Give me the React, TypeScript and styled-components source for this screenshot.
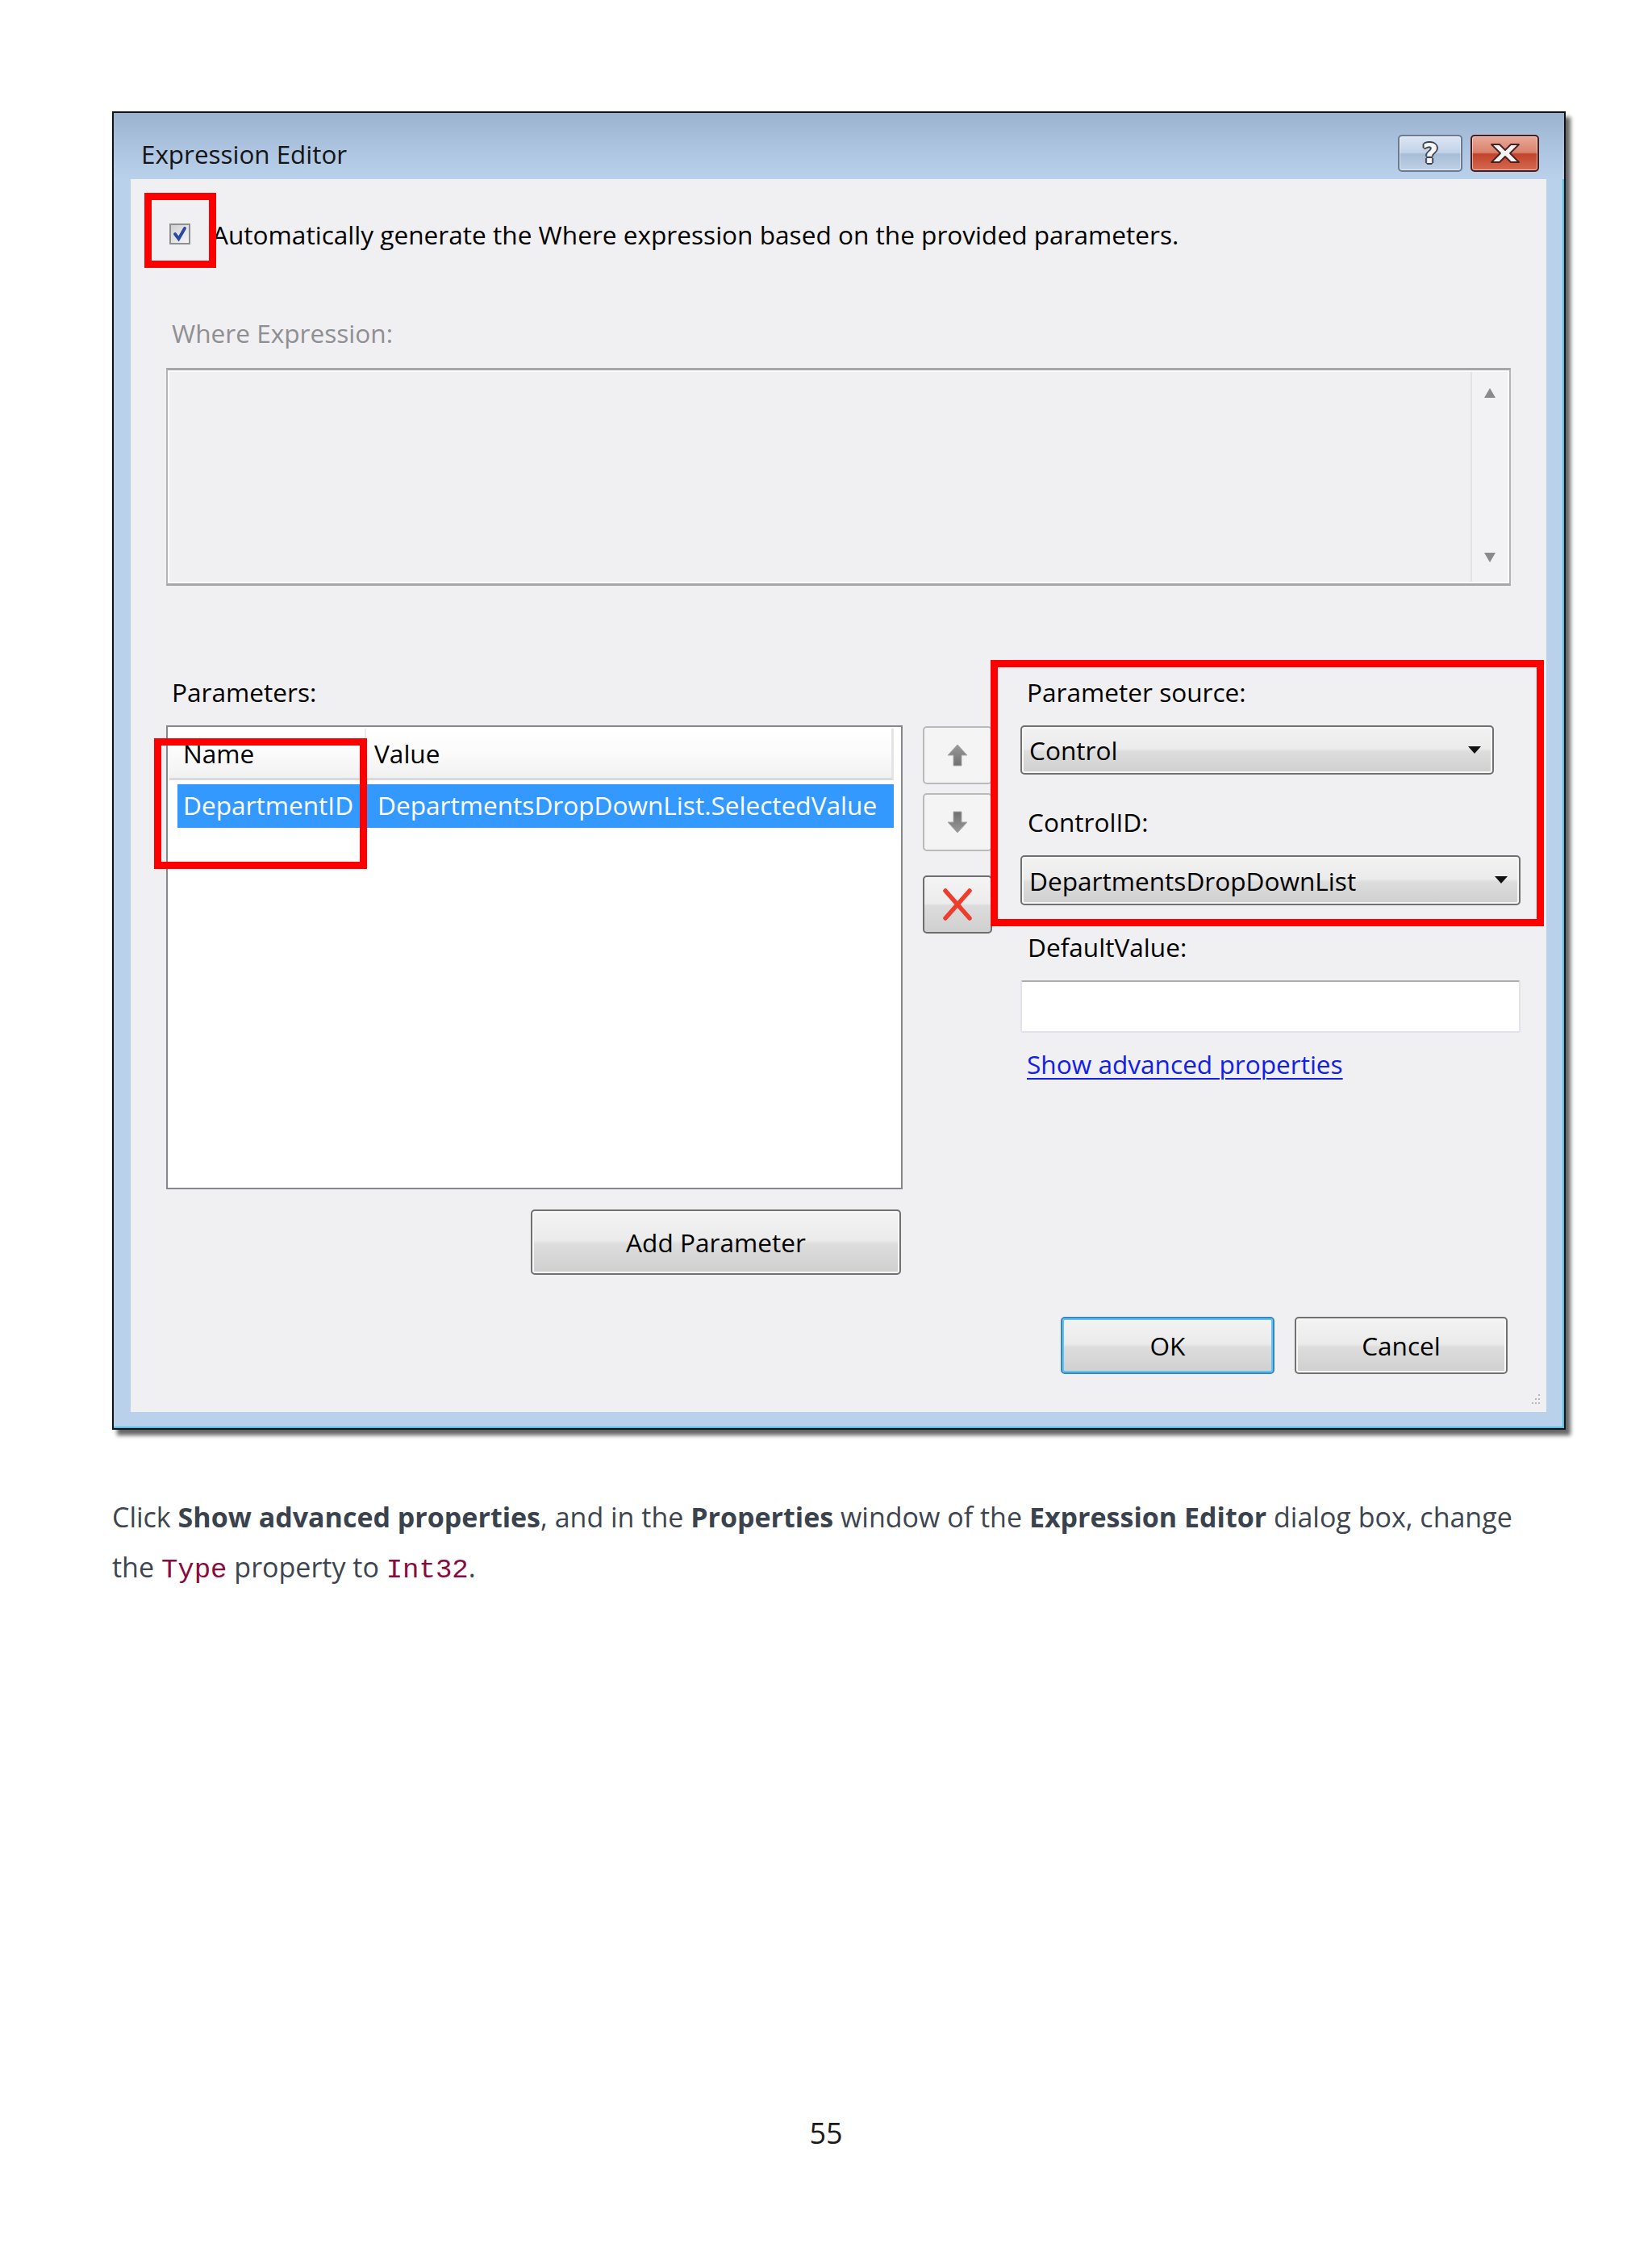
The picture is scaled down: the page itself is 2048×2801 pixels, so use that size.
import React from 'react'
import styled, { createGlobalStyle } from 'styled-components'

const GlobalStyle = createGlobalStyle`
  html, body {
    margin: 0;
    padding: 0;
    background: #ffffff;
  }
  body {
    font-family: 'Open Sans', 'Noto Sans', sans-serif;
  }
`

const Page = styled.div`
  width: 2048px;
  min-height: 2801px;
  box-sizing: border-box;
  padding: 138px 0 0 139px;
  background: #ffffff;
`

const Window = styled.div`
  width: 1802px;
  box-sizing: border-box;
  border: 2px solid #121212;
  background: #b9d1ea;
  box-shadow: inset -2px -2px 0 #4cc6e8, 6px 7px 5px rgba(0, 0, 0, 0.6);
  padding: 0 22px 20px 21px;
  font-family: 'Open Sans', 'Noto Sans', sans-serif;
  font-size: 31.6px;
  color: #000;
`

const TitleBar = styled.div`
  display: flex;
  align-items: center;
  height: 82px;
  box-sizing: border-box;
  padding: 18px 31px 0 34px;
  margin: 0 -22px 0 -21px;
  background: linear-gradient(#9bb3cf, #aec6e2 60%, #b9d1ea);
`

const Title = styled.div`
  flex: 1;
  font-size: 31.4px;
  color: #151515;
`

const CaptionButtons = styled.div`
  display: flex;
  gap: 10px;
`

const CaptionButton = styled.div<{ danger?: boolean }>`
  width: ${({ danger }) => (danger ? '85px' : '80px')};
  height: 46px;
  box-sizing: border-box;
  border-radius: 5px;
  border: 2px solid ${({ danger }) => (danger ? '#4b1b1b' : '#6b7a90')};
  background: ${({ danger }) =>
    danger
      ? 'linear-gradient(#e8a898, #d9826c 48%, #c2432c 52%, #d36a50)'
      : 'linear-gradient(#dbe6f3, #c2d3e8 48%, #a7bcd6 52%, #bfd1e6)'};
  box-shadow: inset 0 0 0 1px rgba(255, 255, 255, 0.55);
  display: flex;
  align-items: center;
  justify-content: center;
`

const HelpGlyph = styled.span`
  font-family: 'DejaVu Sans', sans-serif;
  font-weight: bold;
  font-size: 34px;
  line-height: 1;
  color: #f6f6f6;
  text-shadow: -2px 0 #3a4250, 2px 0 #3a4250, 0 -2px #3a4250, 0 2px #3a4250,
    -1px -1px #3a4250, 1px 1px #3a4250, -1px 1px #3a4250, 1px -1px #3a4250;
`

const Content = styled.div`
  position: relative;
  height: 1528px;
  box-sizing: border-box;
  padding: 42px 32px 0 44px;
  background: #f0eff1;
`

const CheckRow = styled.div`
  display: flex;
  align-items: center;
  height: 52px;
  padding-left: 4px;
  gap: 27px;
`

const CheckBox = styled.div`
  width: 26px;
  height: 26px;
  box-sizing: border-box;
  border: 2px solid #8e8f8f;
  background: linear-gradient(135deg, #d0d0d4, #f6f6f8);
  display: flex;
  align-items: center;
  justify-content: center;
`

const Label = styled.div<{ muted?: boolean; indent?: number }>`
  height: 44px;
  line-height: 44px;
  padding-left: ${({ indent }) => indent ?? 7}px;
  color: ${({ muted }) => (muted ? '#8f8f93' : '#000')};
  white-space: nowrap;
`

const ExprLabel = styled(Label)`
  margin-top: 75px;
`

const ExprBox = styled.div`
  margin-top: 21px;
  width: 1667px;
  height: 270px;
  box-sizing: border-box;
  border: 2px solid #b4b4b8;
  border-top: 3px solid #a6a6aa;
  border-bottom: 3px solid #a6a6aa;
  box-shadow: inset 0 0 0 2px #fbfbfb;
  background: #f0eff1;
  display: flex;
  justify-content: flex-end;
`

const ScrollTrack = styled.div`
  width: 46px;
  margin: 2px 2px 2px 0;
  border-left: 2px solid #e2e2e6;
  background: #f2f1f4;
  display: flex;
  flex-direction: column;
  justify-content: space-between;
  align-items: center;
  padding: 20px 0 24px;
  box-sizing: border-box;
`

const Lower = styled.div`
  display: flex;
  margin-top: 110px;
`

const LeftColumn = styled.div`
  width: 913px;
  display: flex;
  flex-direction: column;
`

const ListBox = styled.div`
  margin-top: 19px;
  height: 575px;
  box-sizing: border-box;
  border: 2px solid #85878c;
  background: #ffffff;
  padding: 2px 9px 0 2px;
`

const ListHeader = styled.div`
  display: flex;
  height: 64px;
  box-sizing: border-box;
  background: linear-gradient(#ffffff, #fbfbfb 50%, #f1f1f2);
  border-bottom: 3px solid #d9d9db;
  border-right: 3px solid #e4e4e6;
`

const HeaderCell = styled.div<{ width?: number; pad: number }>`
  ${({ width }) => (width ? `width: ${width}px;` : 'flex: 1;')}
  box-sizing: border-box;
  padding-left: ${({ pad }) => pad}px;
  line-height: 62px;
  border-right: ${({ width }) => (width ? '2px solid #ececee' : 'none')};
`

const SelectedRow = styled.div`
  display: flex;
  height: 54px;
  margin: 5px 0 0 10px;
  background: #3399ff;
  color: #ffffff;
  line-height: 52px;
`

const RowCell = styled.div<{ width?: number; pad: number }>`
  ${({ width }) => (width ? `width: ${width}px;` : 'flex: 1;')}
  box-sizing: border-box;
  padding-left: ${({ pad }) => pad}px;
  white-space: nowrap;
`

const AddRow = styled.div`
  margin-top: 25px;
  display: flex;
  justify-content: flex-end;
  padding-right: 2px;
`

const PushButton = styled.div<{ width: number; short?: boolean; isDefault?: boolean }>`
  width: ${({ width }) => width}px;
  height: ${({ short }) => (short ? 71 : 81)}px;
  box-sizing: border-box;
  border-radius: 5px;
  border: 2px solid ${({ isDefault }) => (isDefault ? '#3a86c0' : '#707070')};
  box-shadow: ${({ isDefault }) =>
    isDefault ? 'inset 0 0 0 2px #5fc4f0' : 'inset 0 0 0 2px #f8f8f8'};
  background: linear-gradient(#f3f3f3, #ebebeb 47%, #dddddd 53%, #cfcfcf);
  display: flex;
  align-items: center;
  justify-content: center;
  color: #000;
`

const ToolColumn = styled.div`
  margin-left: 25px;
  width: 86px;
  padding-top: 64px;
  display: flex;
  flex-direction: column;
`

const ToolButton = styled.div<{ enabled?: boolean; gap: number }>`
  height: 72px;
  margin-top: ${({ gap }) => gap}px;
  box-sizing: border-box;
  border-radius: 5px;
  border: 2px solid ${({ enabled }) => (enabled ? '#6e6e6e' : '#b9b9bb')};
  background: ${({ enabled }) =>
    enabled ? 'linear-gradient(#f4f4f4, #ececec 48%, #dcdcdc 52%, #d0d0d0)' : '#f4f4f5'};
  display: flex;
  align-items: center;
  justify-content: center;
`

const RightColumn = styled.div`
  margin-left: 35px;
  width: 620px;
  display: flex;
  flex-direction: column;
`

const Spaced = styled.div<{ top: number }>`
  margin-top: ${({ top }) => top}px;
`

const Combo = styled.div<{ width: number; height: number }>`
  width: ${({ width }) => width}px;
  height: ${({ height }) => height}px;
  box-sizing: border-box;
  border-radius: 5px;
  border: 2px solid #707070;
  box-shadow: inset 0 0 0 2px #f6f6f6;
  background: linear-gradient(#f2f2f2, #ebebeb 47%, #dddddd 53%, #cfcfcf);
  display: flex;
  align-items: center;
  justify-content: space-between;
  padding: 0 14px 0 9px;
  white-space: nowrap;
`

const TextBox = styled.div`
  height: 65px;
  box-sizing: border-box;
  border: 2px solid #e2e3ea;
  border-top-color: #abadb3;
  border-radius: 3px;
  background: #ffffff;
`

const Link = styled.a`
  display: block;
  line-height: 44px;
  padding-left: 8px;
  color: #1020e6;
  text-decoration: underline;
  text-underline-offset: 5px;
  text-decoration-thickness: 2px;
`

const Footer = styled.div`
  display: flex;
  justify-content: flex-end;
  gap: 25px;
  margin-top: 52px;
  padding-right: 16px;
`

const Highlight = styled.div<{ x: number; y: number; w: number; h: number }>`
  position: absolute;
  left: ${({ x }) => x}px;
  top: ${({ y }) => y}px;
  width: ${({ w }) => w}px;
  height: ${({ h }) => h}px;
  box-sizing: border-box;
  border: 9px solid #ff0000;
  pointer-events: none;
`

const Grip = styled.svg`
  position: absolute;
  right: 6px;
  bottom: 6px;
`

const Caption = styled.p`
  margin: 77px 0 0;
  width: 1775px;
  font-family: 'Open Sans', 'Noto Sans', sans-serif;
  font-size: 34px;
  line-height: 62px;
  color: #3c4550;

  b {
    font-weight: 700;
    color: #3a434d;
  }
`

const Code = styled.code`
  font-family: 'Liberation Mono', 'DejaVu Sans Mono', monospace;
  font-size: 34px;
  color: #8a0b3c;
`

const PageNumber = styled.div`
  margin: 642px 0 0 -139px;
  width: 2048px;
  text-align: center;
  font-family: 'Open Sans', 'Noto Sans', sans-serif;
  font-size: 36px;
  line-height: 50px;
  color: #1b1b1b;
`

const DropArrow = () => (
  <svg width="16" height="10" viewBox="0 0 16 10">
    <polygon points="0,0 16,0 8,9" fill="#111" />
  </svg>
)

const BlockArrow = ({ down }: { down?: boolean }) => (
  <svg width="26" height="30" viewBox="0 0 26 30" style={down ? { transform: 'scaleY(-1)' } : undefined}>
    <defs>
      <linearGradient id={down ? 'arrDown' : 'arrUp'} x1="0" y1="0" x2="0" y2="1">
        <stop offset="0" stopColor="#9a9a9a" />
        <stop offset="1" stopColor="#6f6f6f" />
      </linearGradient>
    </defs>
    <polygon
      points="13,2 25,15 18,15 18,28 8,28 8,15 1,15"
      fill={`url(#${down ? 'arrDown' : 'arrUp'})`}
      stroke="#a8a8a8"
      strokeWidth="1"
    />
  </svg>
)

export default function App() {
  return (
    <Page>
      <GlobalStyle />
      <Window>
        <TitleBar>
          <Title>Expression Editor</Title>
          <CaptionButtons>
            <CaptionButton>
              <HelpGlyph>?</HelpGlyph>
            </CaptionButton>
            <CaptionButton danger>
              <svg width="38" height="26" viewBox="0 0 38 26">
                <polygon
                  points="2,2 12,2 19,9 26,2 36,2 25,13 36,24 26,24 19,17 12,24 2,24 13,13"
                  fill="#f3f3f3"
                  stroke="#4a2020"
                  strokeWidth="1.8"
                  strokeLinejoin="round"
                />
              </svg>
            </CaptionButton>
          </CaptionButtons>
        </TitleBar>

        <Content>
          <CheckRow>
            <CheckBox>
              <svg width="20" height="20" viewBox="0 0 20 20">
                <path d="M4 10 L8.5 16 L16 3" fill="none" stroke="#2a48a0" strokeWidth="3.8" strokeLinecap="round" />
              </svg>
            </CheckBox>
            <span>Automatically generate the Where expression based on the provided parameters.</span>
          </CheckRow>

          <ExprLabel muted>Where Expression:</ExprLabel>
          <ExprBox>
            <ScrollTrack>
              <svg width="14" height="12" viewBox="0 0 14 12">
                <polygon points="7,0 14,12 0,12" fill="#8a8a8e" />
              </svg>
              <svg width="14" height="12" viewBox="0 0 14 12">
                <polygon points="0,0 14,0 7,12" fill="#8a8a8e" />
              </svg>
            </ScrollTrack>
          </ExprBox>

          <Lower>
            <LeftColumn>
              <Label>Parameters:</Label>
              <ListBox>
                <ListHeader>
                  <HeaderCell width={244} pad={17}>Name</HeaderCell>
                  <HeaderCell pad={10}>Value</HeaderCell>
                </ListHeader>
                <SelectedRow>
                  <RowCell width={234} pad={7}>DepartmentID</RowCell>
                  <RowCell pad={14}>DepartmentsDropDownList.SelectedValue</RowCell>
                </SelectedRow>
              </ListBox>
              <AddRow>
                <PushButton width={459}>Add Parameter</PushButton>
              </AddRow>
            </LeftColumn>

            <ToolColumn>
              <ToolButton gap={0}>
                <BlockArrow />
              </ToolButton>
              <ToolButton gap={11}>
                <BlockArrow down />
              </ToolButton>
              <ToolButton gap={30} enabled>
                <svg width="40" height="42" viewBox="0 0 40 42">
                  <path d="M5 4 L35 38 M35 4 L5 38" stroke="#ee3d2c" strokeWidth="5.5" strokeLinecap="round" />
                </svg>
              </ToolButton>
            </ToolColumn>

            <RightColumn>
              <Label indent={8}>Parameter source:</Label>
              <Spaced top={19}>
                <Combo width={587} height={61}>
                  <span>Control</span>
                  <DropArrow />
                </Combo>
              </Spaced>
              <Spaced top={37}>
                <Label indent={9}>ControlID:</Label>
              </Spaced>
              <Spaced top={19}>
                <Combo width={620} height={62}>
                  <span>DepartmentsDropDownList</span>
                  <DropArrow />
                </Combo>
              </Spaced>
              <Spaced top={30}>
                <Label indent={9}>DefaultValue:</Label>
              </Spaced>
              <Spaced top={19}>
                <TextBox />
              </Spaced>
              <Spaced top={17}>
                <Link href="#">Show advanced properties</Link>
              </Spaced>
            </RightColumn>
          </Lower>

          <Footer>
            <PushButton width={265} short isDefault>OK</PushButton>
            <PushButton width={264} short>Cancel</PushButton>
          </Footer>

          <Highlight x={17} y={17} w={89} h={93} />
          <Highlight x={29} y={693} w={264} h={162} />
          <Highlight x={1066} y={596} w={686} h={330} />

          <Grip width="18" height="18" viewBox="0 0 18 18">
            <g fill="#b8b8bc">
              <rect x="14" y="2" width="2" height="2" />
              <rect x="10" y="7" width="2" height="2" />
              <rect x="14" y="7" width="2" height="2" />
              <rect x="6" y="12" width="2" height="2" />
              <rect x="10" y="12" width="2" height="2" />
              <rect x="14" y="12" width="2" height="2" />
            </g>
          </Grip>
        </Content>
      </Window>

      <Caption>
        Click <b>Show advanced properties</b>, and in the <b>Properties</b> window of the{' '}
        <b>Expression Editor</b> dialog box, change the <Code>Type</Code> property to <Code>Int32</Code>.
      </Caption>

      <PageNumber>55</PageNumber>
    </Page>
  )
}
